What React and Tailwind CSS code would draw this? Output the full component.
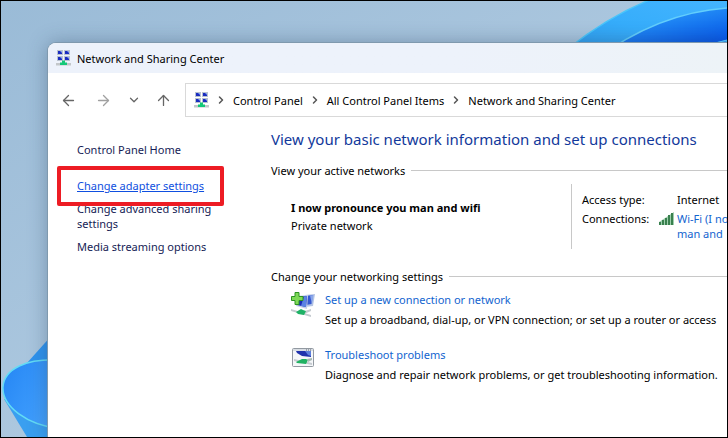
import { ArrowLeft, ArrowRight, ArrowUp, ChevronDown, ChevronRight } from "lucide-react";

export default function App() {
  return (
    <div className="relative flex min-h-screen flex-col overflow-hidden border border-black bg-linear-to-br from-[#9abbd7] to-[#bdd3e6] font-['Noto_Sans',sans-serif] text-[11px] leading-[15px] text-black">
      <Wallpaper />

      <div className="relative mt-[42px] ml-[47px] flex flex-1 flex-col overflow-hidden rounded-tl-lg bg-white shadow-[0_0_20px_0_rgba(40,65,95,0.4)] ring-1 ring-[#7f99ae]">
        <header className="flex h-[30px] shrink-0 items-center gap-1.5 bg-linear-to-r from-[#edf2fb] from-60% to-[#edf3f7] pl-2">
          <NetworkIcon />
          <h1>Network and Sharing Center</h1>
        </header>

        <Toolbar />

        <div className="flex flex-1 pt-3">
          <Sidebar />
          <Content />
        </div>
      </div>
    </div>
  );
}

function Toolbar() {
  return (
    <div className="flex shrink-0 items-center pt-2.5">
      <nav aria-label="History" className="flex w-[137px] shrink-0 items-center pl-3 text-[#666]">
        <button type="button" aria-label="Back" className="w-[35px]">
          <ArrowLeft size={17} strokeWidth={1.3} absoluteStrokeWidth />
        </button>
        <button type="button" aria-label="Forward" className="w-8 text-[#a0a0a0]">
          <ArrowRight size={17} strokeWidth={1.3} absoluteStrokeWidth />
        </button>
        <button type="button" aria-label="Recent locations" className="w-7">
          <ChevronDown size={14} strokeWidth={1.3} absoluteStrokeWidth />
        </button>
        <button type="button" aria-label="Up">
          <ArrowUp size={17} strokeWidth={1.3} absoluteStrokeWidth />
        </button>
      </nav>

      <nav
        aria-label="Address"
        className="flex h-[34px] flex-1 items-center border border-r-0 border-[#d9d9d9] pl-2 whitespace-nowrap"
      >
        <NetworkIcon />
        <Crumb label="Control Panel" />
        <Crumb label="All Control Panel Items" />
        <Crumb label="Network and Sharing Center" />
      </nav>
    </div>
  );
}

function Crumb({ label }) {
  return (
    <>
      <ChevronRight size={12} strokeWidth={1.5} absoluteStrokeWidth className="mx-1.5 shrink-0 text-[#555]" />
      <button type="button">{label}</button>
    </>
  );
}

function Sidebar() {
  return (
    <nav className="w-[223px] shrink-0 pt-[13px] pr-12 pl-[29px] text-[#151c55]">
      <a href="#home" className="block">
        Control Panel Home
      </a>
      <div className="relative mt-[21px] w-fit whitespace-nowrap">
        <a href="#adapter" className="text-[#0f4fe0] underline">
          Change adapter settings
        </a>
        <span className="pointer-events-none absolute -inset-x-5 -top-3 -bottom-[13px] z-10 rounded-xs border-4 border-[#ed1c24]" />
      </div>
      <a href="#sharing" className="mt-2 block">
        Change advanced sharing settings
      </a>
      <a href="#streaming" className="mt-2 block whitespace-nowrap">
        Media streaming options
      </a>
    </nav>
  );
}

function Content() {
  return (
    <main className="min-w-0 flex-1 whitespace-nowrap">
      <h2 className="text-[15px] leading-5 text-[#12399b]">
        View your basic network information and set up connections
      </h2>

      <SectionTitle>View your active networks</SectionTitle>
      <section className="my-1.5 flex h-[65px] pl-5">
        <div className="w-[280px] shrink-0 pt-4">
          <p className="font-bold">I now pronounce you man and wifi</p>
          <p className="mt-[3px]">Private network</p>
        </div>
        <dl className="grid shrink-0 grid-cols-[77px_18px_auto] content-start gap-y-1 border-l border-[#c8c8c8] pt-2 pl-2.5">
          <dt>Access type:</dt>
          <dd className="col-start-3">Internet</dd>
          <dt>Connections:</dt>
          <dd className="col-span-2 flex gap-[3px]">
            <SignalIcon />
            <a href="#wifi" className="block text-[#1264cf]">
              Wi-Fi (I now
              <br />
              man and
            </a>
          </dd>
        </dl>
      </section>

      <SectionTitle>Change your networking settings</SectionTitle>
      <section className="space-y-5 pt-2 pl-5">
        <Task
          icon={<NewConnectionIcon />}
          title="Set up a new connection or network"
          text="Set up a broadband, dial-up, or VPN connection; or set up a router or access"
        />
        <Task
          icon={<TroubleshootIcon />}
          title="Troubleshoot problems"
          text="Diagnose and repair network problems, or get troubleshooting information."
        />
      </section>
    </main>
  );
}

function SectionTitle({ children }) {
  return (
    <h3 className="flex items-center gap-1.5 pt-3.5 after:h-px after:flex-1 after:bg-[#c8c8c8]">
      {children}
    </h3>
  );
}

function Task({ icon, title, text }) {
  return (
    <div className="flex gap-2.5">
      {icon}
      <div>
        <a href="#task" className="block text-[#1264cf]">
          {title}
        </a>
        <p className="mt-[5px]">{text}</p>
      </div>
    </div>
  );
}

function Wallpaper() {
  return (
    <>
      <svg className="absolute top-0 right-0" width="160" height="60" viewBox="0 0 160 60" aria-hidden="true">
        <defs>
          <linearGradient id="petal" x1="0" y1="1" x2="1" y2="0">
            <stop offset="0" stopColor="#2b96e8" />
            <stop offset="0.5" stopColor="#36adfb" />
            <stop offset="1" stopColor="#45b5ff" />
          </linearGradient>
          <linearGradient id="petalDeep" x1="0.3" y1="0" x2="0.8" y2="0.9">
            <stop offset="0" stopColor="#30a6fd" />
            <stop offset="0.8" stopColor="#0758e8" />
          </linearGradient>
        </defs>
        <path d="M-16 62Q36 16 90 -4H160V62Z" fill="url(#petal)" />
        <path d="M-16 62Q36 16 90 -4" fill="none" stroke="#4ac5fa" strokeWidth="1.5" />
        <path d="M24 62Q88 12 160 7V62Z" fill="url(#petalDeep)" />
        <path d="M24 62Q88 12 160 7" fill="none" stroke="#63cefc" strokeWidth="1.5" />
        <path d="M136 48Q147 41 160 39V60H136Z" fill="#2b9cf5" stroke="#63cefc" />
      </svg>
      <svg className="absolute bottom-0 left-0" width="60" height="104" viewBox="0 0 60 104" aria-hidden="true">
        <defs>
          <linearGradient id="bloom" x1="0" y1="0" x2="1" y2="0.6">
            <stop offset="0" stopColor="#2485f4" />
            <stop offset="1" stopColor="#45a3ff" />
          </linearGradient>
        </defs>
        <path d="M60 -8L26 30L60 40Z" fill="#2f93ee" />
        <path d="M3 66L26 104H60V80Z" fill="#3a9ff0" />
        <path d="M60 27C25 25 3 36 2 54C1 73 25 92 60 96Z" fill="url(#bloom)" />
        <path d="M60 27C25 25 3 36 2 54C1 73 25 92 60 96" fill="none" stroke="#63dcf5" strokeWidth="1.5" />
      </svg>
    </>
  );
}

function NetworkIcon() {
  const screens = [[1, 0], [8, 0], [1, 6], [8, 6]];
  return (
    <svg className="shrink-0" width="15" height="16" viewBox="0 0 15 16" aria-hidden="true">
      {screens.map(([x, y]) => (
        <g key={`${x}-${y}`}>
          <rect x={x} y={y} width="6" height="5" fill="#b9c2cf" />
          <rect x={x + 1} y={y + 1} width="4" height="3" fill="#1a2cc0" />
          <path d={`M${x + 3} ${y + 1}h2v2z`} fill="#8da9ee" />
        </g>
      ))}
      <path d="M0 13h15v2.5H0z" fill="#c3c7ca" />
      <path d="M6 10.5h3v2h2V15H4v-2.5h2z" fill="#14c878" />
    </svg>
  );
}

function SignalIcon() {
  return (
    <svg className="mt-px shrink-0" width="15" height="13" viewBox="0 0 15 13" aria-hidden="true">
      <path d="M0 10L15 0V13H0Z" fill="#9fceae" />
      <path d="M0 10h2v3H0zM3 8h2v5H3zM6 6h2v7H6zM9 3h2v10H9zM12 1h2v12h-2z" fill="#39804e" />
    </svg>
  );
}

function NewConnectionIcon() {
  return (
    <svg className="shrink-0" width="24" height="26" viewBox="0 0 24 26" aria-hidden="true">
      <path d="M14 3l10-1-2 12-8 1z" fill="#b4c4e4" />
      <path d="M15 4l7-1-1.500 9-5.500 1z" fill="#3558cf" />
      <path d="M19 3.500l3.500-.5-1.500 9z" fill="#8aa6ea" />
      <path d="M5 4l12-1-1 14-11-3z" fill="#c7d2e8" />
      <path d="M6 5l10-1-1 11-9-2z" fill="#1c2cb4" />
      <path d="M13 4.500l3-.5-1 11-5-1z" fill="#5a82e4" />
      <path d="M0 17l20 6v2L0 19zM11 20l9-3v2l-7 3z" fill="#c5cbd0" />
      <path d="M5 20l5-3 2 1 3 1-2 4-6-1z" fill="#1fb266" />
      <path d="M4 .500h4v4h4v4H8v4H4v-4H.500v-4H4z" fill="#7ed957" stroke="#2d9323" />
    </svg>
  );
}

function TroubleshootIcon() {
  return (
    <svg className="shrink-0" width="24" height="22" viewBox="0 0 24 22" aria-hidden="true">
      <rect x="1.500" y="1.500" width="21" height="18" rx="1" fill="#f5f7f9" stroke="#9299a1" />
      <path d="M2 2h20v2H2z" fill="#d9dee4" />
      <path d="M15 3h1M17 3h1M19 3h1" stroke="#5b6570" />
      <path d="M5 4h15v6l-9-1-5-3z" fill="#2033ad" />
      <path d="M14 4h6v5l-3-1z" fill="#5d7fdc" />
      <path d="M3 12l18 4v2L3 14z" fill="#c5cbd0" />
      <path d="M5 15l6-3 4 0 2 1-2 4-9-1z" fill="#20b262" />
      <path d="M16 12l5-1v2l-4 2z" fill="#a8b9b2" />
    </svg>
  );
}
